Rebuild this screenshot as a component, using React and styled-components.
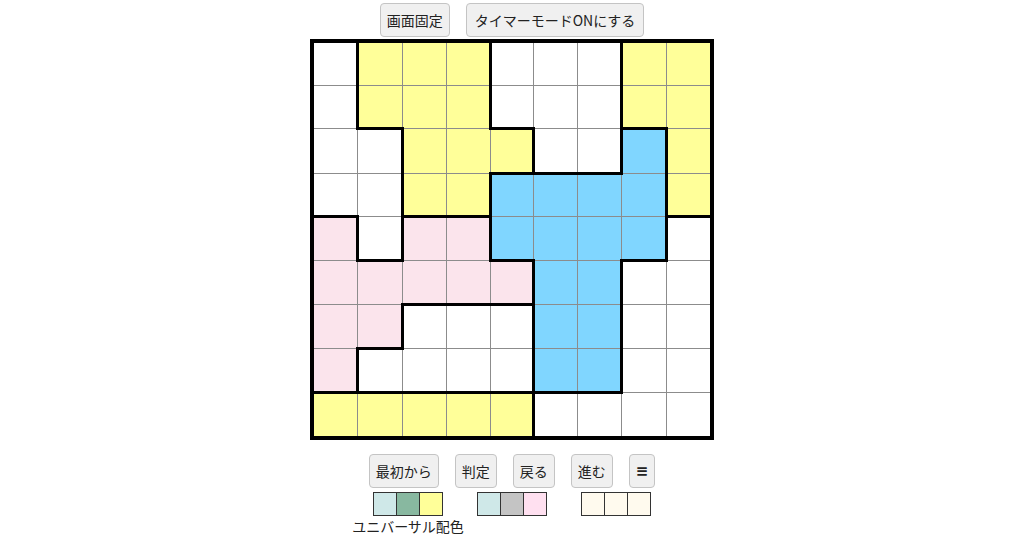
import React from 'react';
import styled, { createGlobalStyle } from 'styled-components';

const GlobalStyle = createGlobalStyle`
  body {
    margin: 0;
    background: #ffffff;
    font-family: "Noto Sans CJK JP", "Noto Sans", sans-serif;
    color: #222222;
  }
`;

const Page = styled.div`
  display: flex;
  flex-direction: column;
  align-items: center;
  width: 1024px;
  height: 538px;
  overflow: hidden;
`;

const ButtonRow = styled.div`
  display: flex;
  justify-content: center;
  gap: 16px;
  margin-top: ${({ $top }) => $top}px;
`;

const Button = styled.button`
  height: 34px;
  padding: 0 ${({ $pad }) => $pad || 6}px;
  border: 1px solid #c4c4c4;
  border-radius: 4px;
  background: #f0f0f0;
  color: #222222;
  font-family: "Noto Sans CJK JP", "Noto Sans", sans-serif;
  font-size: 14px;
  cursor: pointer;
`;

const MenuButton = styled(Button)`
  padding: 0 6px;
  font-family: "DejaVu Sans", sans-serif;
  font-size: 15px;
  font-weight: bold;
`;

const Board = styled.table`
  margin-top: 2px;
  border-collapse: collapse;
  border: 4px solid #000000;
`;

const Cell = styled.td`
  width: 41.8px;
  height: 41.5px;
  padding: 0;
  background: ${({ $color }) => $color};
  border-top: ${({ $t }) => ($t ? '3px solid #000' : '1px solid #8c8c8c')};
  border-bottom: ${({ $b }) => ($b ? '3px solid #000' : '1px solid #8c8c8c')};
  border-left: ${({ $l }) => ($l ? '3px solid #000' : '1px solid #8c8c8c')};
  border-right: ${({ $r }) => ($r ? '3px solid #000' : '1px solid #8c8c8c')};
`;

const PaletteRow = styled.div`
  display: flex;
  justify-content: center;
  gap: 36px;
  margin-top: 4px;
`;

const PaletteGroup = styled.div`
  display: flex;
  flex-direction: column;
  align-items: center;
  width: 68px;
`;

const Swatches = styled.div`
  display: flex;
  border: 1px solid #333333;
`;

const Swatch = styled.div`
  width: 22px;
  height: 22px;
  background: ${({ $color }) => $color};
  & + & {
    border-left: 1px solid #333333;
  }
`;

const PaletteLabel = styled.div`
  margin-top: 2px;
  white-space: nowrap;
  font-size: 14px;
  line-height: 17px;
`;

const COLORS = {
  W: '#ffffff',
  Y: '#ffff99',
  B: '#80d6ff',
  P: '#fbe4ec',
};

const LAYOUT = [
  'WYYYWWWYY',
  'WYYYWWWYY',
  'WWYYYWWBY',
  'WWYYBBBBY',
  'PWPPBBBBW',
  'PPPPPBBWW',
  'PPWWWBBWW',
  'PWWWWBBWW',
  'YYYYYWWWW',
];

const PALETTES = [
  { colors: ['#cfe8e8', '#88b8a0', '#ffff99'], label: 'ユニバーサル配色' },
  { colors: ['#cfe8e8', '#c4c4c4', '#ffe0f0'] },
  { colors: ['#fffaee', '#fffaee', '#fffaee'] },
];

const at = (r, c) => (LAYOUT[r] ? LAYOUT[r][c] : undefined);

export default function App() {
  return (
    <>
      <GlobalStyle />
      <Page>
        <ButtonRow $top={3}>
          <Button>画面固定</Button>
          <Button $pad={8}>タイマーモードONにする</Button>
        </ButtonRow>
        <Board>
          <tbody>
            {LAYOUT.map((row, r) => (
              <tr key={r}>
                {row.split('').map((k, c) => (
                  <Cell
                    key={c}
                    $color={COLORS[k]}
                    $t={at(r - 1, c) !== k}
                    $b={at(r + 1, c) !== k}
                    $l={at(r, c - 1) !== k}
                    $r={at(r, c + 1) !== k}
                  />
                ))}
              </tr>
            ))}
          </tbody>
        </Board>
        <ButtonRow $top={14}>
          <Button>最初から</Button>
          <Button>判定</Button>
          <Button>戻る</Button>
          <Button>進む</Button>
          <MenuButton>≡</MenuButton>
        </ButtonRow>
        <PaletteRow>
          {PALETTES.map((p, i) => (
            <PaletteGroup key={i}>
              <Swatches>
                {p.colors.map((col, j) => (
                  <Swatch key={j} $color={col} />
                ))}
              </Swatches>
              {p.label && <PaletteLabel>{p.label}</PaletteLabel>}
            </PaletteGroup>
          ))}
        </PaletteRow>
      </Page>
    </>
  );
}
